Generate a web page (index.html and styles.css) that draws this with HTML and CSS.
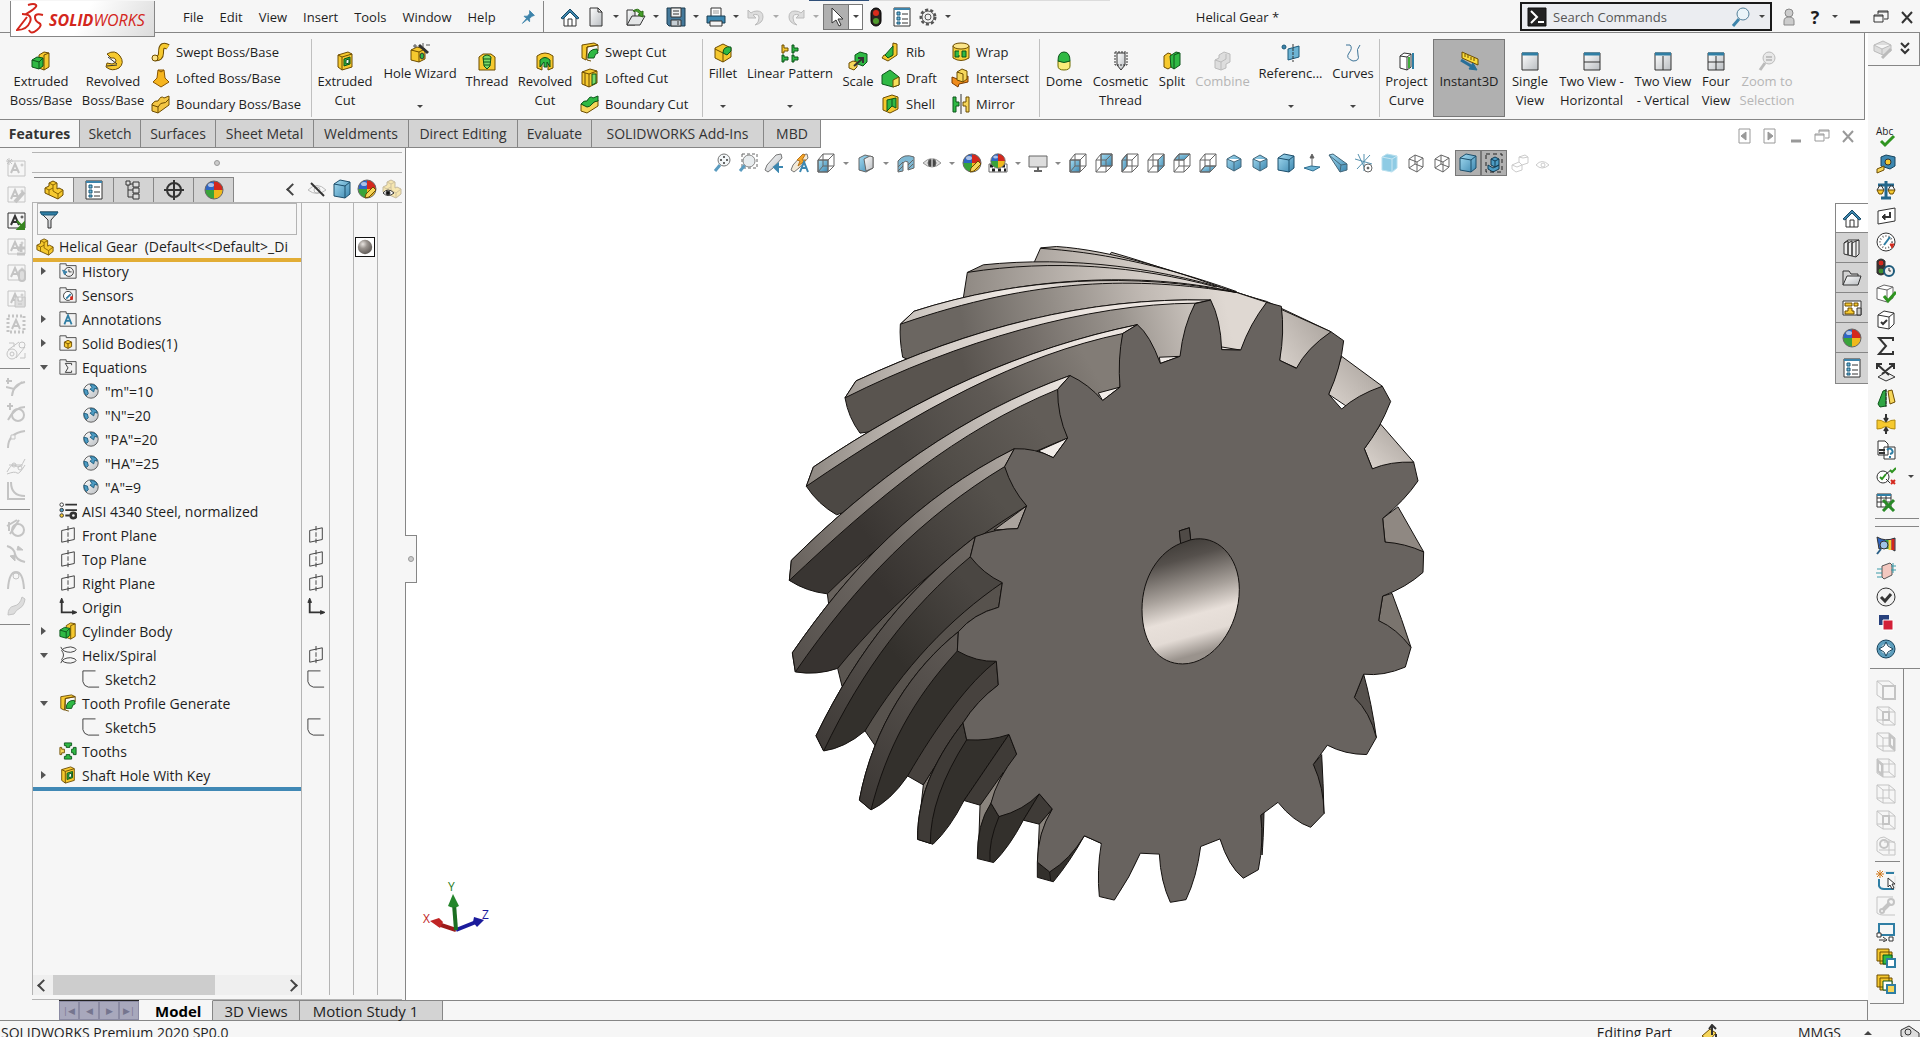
FILE: index.html
```html
<!DOCTYPE html>
<html lang="en">
<head>
    <meta charset="UTF-8">
    <meta name="viewport" content="width=device-width, initial-scale=1.0">
    <title>Helical Gear - SOLIDWORKS</title>
    <link rel="stylesheet" href="styles.css">
</head>
<body>
    <!-- Icon sprite -->
    <svg class="sprite" aria-hidden="true">
        <defs>
            <linearGradient id="steel" x1="0" y1="0" x2="1" y2="1"><stop offset="0" stop-color="#fff"/><stop offset="1" stop-color="#b9bdc1"/></linearGradient>
            <linearGradient id="aqua" x1="0" y1="0" x2="1" y2="1"><stop offset="0" stop-color="#a5dcf2"/><stop offset="1" stop-color="#3c87b0"/></linearGradient>
            <radialGradient id="ball" cx=".35" cy=".3" r=".75"><stop offset="0" stop-color="#e8e4e0"/><stop offset=".4" stop-color="#9a948f"/><stop offset="1" stop-color="#5c5753"/></radialGradient>
        </defs>
        <symbol id="home" viewBox="0 0 20 20"><path d="M4 10v9h12v-9l-6-6z" fill="#fff"/><path d="M1 11l9-9 9 9-2 1-7-7-7 7z" fill="#3d84ab" stroke="#184a66"/><path d="M8 19v-7h4v7"/></symbol>
        <symbol id="doc" viewBox="0 0 20 20"><path d="M4 1h8l4 4v14H4zM12 1v4h4" fill="url(#steel)"/></symbol>
        <symbol id="open" viewBox="0 0 20 20"><path d="M1 18V3h6l2 2v13z" fill="url(#steel)"/><path d="M1 18L6 9h13l-5 9z" fill="#e4e6e7"/><path d="M7 4q5-4 8 1l2-1v6l-5-2 2-1q-3-4-7-3z" fill="#46a02a" stroke="#2a6d14"/></symbol>
        <symbol id="save" viewBox="0 0 20 20"><path d="M1 1h18v18H3l-2-2z" fill="#45799a" stroke="#1d3c50"/><path d="M5 1h10v9H5z" fill="#f0f2f3"/><path d="M7 4h6M7 7h6"/><path d="M5 13h10v6H5z" fill="#c6ced4"/><path d="M12 14v4"/></symbol>
        <symbol id="print" viewBox="0 0 20 20"><path d="M5 9V1h10v8" fill="#fff"/><path d="M1 9h18v7H1z" fill="#3c87b0" stroke="#183c50"/><path d="M4 14h12v5H4z" fill="#f4f4f4"/><path d="M7 4h6M7 6h6" stroke="#999"/></symbol>
        <symbol id="undo" viewBox="0 0 20 20"><path d="M2 3v8h8L7 8q6-2 6 3t-4 7q8-2 8-8t-6-6q-4 0-6 2z" fill="#ddd" stroke="#bbb"/></symbol>
        <symbol id="redo" viewBox="0 0 20 20"><path d="M18 3v8h-8l3-3q-6-2-6 3t4 7q-8-2-8-8t6-6q4 0 6 2z" fill="#ddd" stroke="#bbb"/></symbol>
        <symbol id="cursor" viewBox="0 0 20 20"><path d="M6 1v15l4-3 3 6 2-1-3-6h5z" fill="#fff" stroke="#333"/></symbol>
        <symbol id="traffic" viewBox="0 0 20 20"><rect x="5" y="1" width="10" height="18" rx="5" fill="#2a2320" stroke="#000"/><circle cx="10" cy="6" r="3" fill="#d92b1c" stroke="none"/><circle cx="10" cy="14" r="3" fill="#4f9b2c" stroke="none"/></symbol>
        <symbol id="list" viewBox="0 0 20 20"><path d="M2 1h16v18H2z" fill="#fff"/><path d="M2 2h16" stroke="#3d84ab" stroke-width="2"/><path d="M5 5h3v3H5zM5 10h3v3H5zM5 15h3v2H5z" fill="#6fb5d6" stroke="#1d5a7a"/><path d="M10 7h6M10 12h6M10 16h6"/></symbol>
        <symbol id="cog" viewBox="0 0 20 20"><circle cx="10" cy="10" r="7" stroke-width="3" stroke-dasharray="3 2" stroke="#555"/><circle cx="10" cy="10" r="6" fill="#f0f0f0" stroke="#555"/><circle cx="10" cy="10" r="3" stroke="#555"/></symbol>
        <symbol id="pin" viewBox="0 0 20 20"><path d="M12 2l6 6-3 1-3 3 0 4-3-3-6 5 5-6-3-3h4l3-3z" fill="#3d84ab" stroke="#3d84ab"/></symbol>
        <symbol id="prompt" viewBox="0 0 20 20"><path d="M1 1h18v18H1z" fill="#222" stroke="#111"/><path d="M4 4l6 6-6 6M11 15h6" stroke="#fff" stroke-width="2"/></symbol>
        <symbol id="lens" viewBox="0 0 20 20"><path d="M8 12l-6 7" stroke="#3d84ab" stroke-width="3"/><circle cx="12" cy="7" r="6" fill="#eaf4f9" stroke="#54809a"/></symbol>
        <symbol id="user" viewBox="0 0 20 20"><circle cx="10" cy="6" r="4" fill="#ccc" stroke="#888"/><path d="M5 18v-4q0-4 5-4t5 4v4z" fill="#ccc" stroke="#888"/></symbol>
        <symbol id="win-min" viewBox="0 0 20 20"><path d="M5 15h10" stroke-width="3"/></symbol>
        <symbol id="win-max" viewBox="0 0 20 20"><path d="M3 8h9v7H3zM3 9h9M7 7V4h10v8h-4M7 5h10"/></symbol>
        <symbol id="win-close" viewBox="0 0 20 20"><path d="M5 5l10 11M15 5L5 16" stroke-width="2"/></symbol>
        <symbol id="box-left" viewBox="0 0 20 20"><path d="M5 3h11v14H5z"/><path d="M12 6v8l-5-4z" fill="#999"/></symbol>
        <symbol id="box-right" viewBox="0 0 20 20"><path d="M4 3h11v14H4z"/><path d="M8 6v8l5-4z" fill="#999"/></symbol>

        <!-- Features -->
        <symbol id="extrude" viewBox="0 0 20 20"><path d="M8 4l5-3 5 1v14l-5 3-5-2z" fill="#f6c92f" stroke="#6d4c00"/><path d="M13 4v15M13 4l5-2" stroke="#6d4c00"/><path d="M1 9l5-3 6 1v8l-4 3-7-2z" fill="#2fb944" stroke="#0c541a"/><path d="M1 9l7 2v7M8 11l4-4" stroke="#0c541a"/></symbol>
        <symbol id="revolve" viewBox="0 0 20 20"><path d="M4 3q8-5 13 2t-1 12q-7 4-13-1l1-4 5 1q5-1 4-4t-5-2z" fill="#f6c92f" stroke="#6d4c00"/><path d="M5 6l9 7M4 15l10-1"/></symbol>
        <symbol id="sweep" viewBox="0 0 20 20"><path d="M4 16q6 1 6-5T12 4t5 1" stroke="#6d4c00" stroke-width="6"/><path d="M4 16q6 1 6-5T12 4t5 1" stroke="#f6c92f" stroke-width="4"/><circle cx="4" cy="16" r="3" fill="#fbe38a" stroke="#6d4c00"/></symbol>
        <symbol id="loft" viewBox="0 0 20 20"><path d="M7 2h6l1 8 4 4-8 5-8-5 4-4z" fill="#f6b51f" stroke="#8a5600"/><path d="M7 2l3 2 3-2" stroke="#8a5600"/></symbol>
        <symbol id="boundary" viewBox="0 0 20 20"><path d="M1 10q3-4 6-3 3-6 6-3l5-2v9l-11 8-6-2z" fill="#f3c644" stroke="#6d4c00"/><path d="M1 11l6 2v6M7 13q3-5 5-4t6-4" stroke="#6d4c00"/></symbol>
        <symbol id="boundary-cut" viewBox="0 0 20 20"><path d="M1 10l6 2 11-6v6l-11 7-6-2z" fill="#f6d65a" stroke="#6d4c00"/><path d="M1 10q3-4 6-3 3-6 6-3l5-2v5q-4 0-6 3t-5 3z" fill="#2fb944" stroke="#0c541a"/></symbol>
        <symbol id="cut" viewBox="0 0 20 20"><path d="M3 4l10-3 4 2v13l-10 3-4-3z" fill="#f6c92f" stroke="#6d4c00"/><path d="M3 4l4 2 10-3M7 6v13" stroke="#6d4c00"/><path d="M9 8l6-2v7l-6 2z" fill="#35b648" stroke="#0c541a"/><path d="M11 9l3-1v4l-3 1z" fill="#fff" stroke="#0c541a"/></symbol>
        <symbol id="hole" viewBox="0 0 20 20"><path d="M1 7l6-3 8 2v10l-6 3-8-2z" fill="#f6c92f" stroke="#6d4c00"/><path d="M1 7l8 2v10M9 9l6-3" stroke="#6d4c00"/><ellipse cx="12" cy="13" rx="2" ry="3" fill="#2fb944"/><path d="M9 2l9 8" stroke="#333" stroke-width="3"/><path d="M5 1v4M3 3h4M13 0v4M16 2h4" stroke="#555"/></symbol>
        <symbol id="thread" viewBox="0 0 20 20"><path d="M2 6l4-3h8l4 3v13H2z" fill="#f6c92f" stroke="#6d4c00"/><path d="M6 6q4-4 8 0l-1 9-3 3-3-3z" fill="#7ddb68" stroke="#0c541a"/><path d="M6 8h8M6 11h8M7 14h6" stroke="#0c541a"/></symbol>
        <symbol id="revolve-cut" viewBox="0 0 20 20"><path d="M2 5q8-6 16 0v12l-5 2V8q-3-3-6 0v11l-5-2z" fill="#f6c92f" stroke="#6d4c00"/><path d="M5 9q5-5 10 0v7l-3-5v5h-3v-5l-4 5z" fill="#2fb944" stroke="#0c541a"/></symbol>
        <symbol id="sweep-cut" viewBox="0 0 20 20"><path d="M2 3l12-2 4 2-11 2-1 13-4-2z" fill="#f6c92f" stroke="#6d4c00"/><path d="M7 5l11-2v6M7 5v13l4 1" stroke="#6d4c00"/><path d="M8 16q0-9 9-9l1 4q-3 0-4 5z" fill="#2fb944" stroke="#0c541a"/></symbol>
        <symbol id="loft-cut" viewBox="0 0 20 20"><path d="M2 4l8-3 7 2v12l-8 4-7-3z" fill="#f6c92f" stroke="#6d4c00"/><path d="M2 4l7 2 8-3M9 6v13M5 5v12" stroke="#6d4c00"/><path d="M12 6h4v9l-4 2z" fill="#7ddb68" stroke="#0c541a"/></symbol>
        <symbol id="fillet" viewBox="0 0 20 20"><path d="M2 5l8-4 8 4v9l-8 5-8-4z" fill="#f6c92f" stroke="#6d4c00"/><path d="M2 6l8 4v9" stroke="#6d4c00"/><path d="M10 10q0-7 8-6v4l-4 4z" fill="#2fb944" stroke="#0c541a"/></symbol>
        <symbol id="pattern" viewBox="0 0 20 20"><path d="M2 2h2v3h4v3H4v2H2z" fill="#f6c92f" stroke="#6d4c00"/><path d="M12 2h2v3h4v3h-4v2h-2zM2 12h2v2h4v3H4v2H2zM12 12h2v2h4v3h-4v2h-2z" fill="#2fb944" stroke="#0c541a"/></symbol>
        <symbol id="scale" viewBox="0 0 20 20"><path d="M7 4l5-3 7 2v8l-4 4-8-3z" fill="#2fb944" stroke="#0c541a"/><path d="M1 12l4-2 4 1v5l-3 3-5-2z" fill="#f6d65a" stroke="#6d4c00"/><path d="M6 15l8-7M10 7h5v5" stroke-width="2"/></symbol>
        <symbol id="rib" viewBox="0 0 20 20"><path d="M12 1l4 1v11l-9 6-6-3 2-3 8 1z" fill="#f6c92f" stroke="#6d4c00"/><path d="M4 13l8-9v9l-5 3z" fill="#2fb944" stroke="#0c541a"/></symbol>
        <symbol id="draft" viewBox="0 0 20 20"><path d="M1 7l8-5 9 7v8l-6 2-11-3z" fill="#2fb944" stroke="#0c541a"/><path d="M12 12l6-3v8l-6 2z" fill="#f6e05a" stroke="#6d4c00"/></symbol>
        <symbol id="shell" viewBox="0 0 20 20"><path d="M2 4l9-3 6 2v12l-8 4-7-3z" fill="#f6c92f" stroke="#6d4c00"/><path d="M6 6l9-2v10l-4-2-5 5z" fill="#2fb944" stroke="#0c541a"/><path d="M11 5v7" stroke="#0c541a"/></symbol>
        <symbol id="wrap" viewBox="0 0 20 20"><path d="M2 4v12q8 5 16 0V4" fill="#f6d03a" stroke="#6d4c00"/><ellipse cx="10" cy="4" rx="8" ry="3" fill="#fbe58a" stroke="#6d4c00"/><path d="M8 9H4v6h4v-2M11 9h4v6h-4z" fill="#2fb944" stroke="#0c541a"/></symbol>
        <symbol id="intersect" viewBox="0 0 20 20"><path d="M1 9l8 3 8-4v6l-9 2-1 3-6-4z" fill="#f08c1c" stroke="#7a3a00"/><path d="M6 4l5-3 5 2v8l-4 3-6-2z" fill="#f6d65a" stroke="#6d4c00"/><path d="M6 4l6 2v8" stroke="#6d4c00"/></symbol>
        <symbol id="mirror" viewBox="0 0 20 20"><path d="M2 3h3v5h3v4H5v6H2z" fill="#2fb944" stroke="#0c541a"/><path d="M18 3h-3v5h-3v4h3v6h3z" fill="#f6d65a" stroke="#6d4c00"/><path d="M10 0v20"/></symbol>
        <symbol id="dome" viewBox="0 0 20 20"><path d="M4 10v5q0 4 6 4t6-4v-5z" fill="#f9ec7a" stroke="#6d6c00"/><path d="M4 10q0-9 6-9t6 9q-6 3-12 0z" fill="#2fb944" stroke="#0c541a"/></symbol>
        <symbol id="cosmetic" viewBox="0 0 20 20"><path d="M6 2h8v12l-4 5-4-5z" fill="url(#steel)"/><path d="M4 1h12v13H4z" stroke-dasharray="2 1"/></symbol>
        <symbol id="split" viewBox="0 0 20 20"><path d="M2 5l4-3 3 1v13l-3 2-4-2z" fill="#f6c92f" stroke="#6d4c00"/><path d="M8 5l6-4 4 1v12l-6 4-3-2z" fill="#2fb944" stroke="#0c541a"/><path d="M12 4v14M12 4l5-2" stroke="#0c541a"/></symbol>
        <symbol id="combine" viewBox="0 0 20 20"><path d="M2 9l4-2V4l5-3 6 2v8l-4 2v4l-5 2-6-2z" fill="#ddd" stroke="#bbb"/><path d="M2 9l6 2v8M8 11l5-3V3" stroke="#bbb"/></symbol>
        <symbol id="refgeo" viewBox="0 0 20 20"><circle cx="3" cy="4" r="2" fill="#3d84ab" stroke="#1d5a7a"/><path d="M7 6l11-3v11L7 17z" fill="#6db4d4" stroke="#1d5a7a"/><path d="M12 1v18" stroke-dasharray="3 1"/></symbol>
        <symbol id="curve" viewBox="0 0 20 20"><path d="M3 2h4q3 3-1 8t4 8q7 0 5-6t2-10" stroke="#3c7397"/></symbol>
        <symbol id="project" viewBox="0 0 20 20"><path d="M3 5l4-3 7 1v13l-4 3-7-2z" fill="#fff"/><path d="M3 5l7 1v13M10 6l4-3"/><path d="M12 6v11" stroke="#3fae3a" stroke-width="2"/><path d="M16 2v16" stroke="#2f7ea4" stroke-width="2"/></symbol>
        <symbol id="instant" viewBox="0 0 20 20"><path d="M3 1l16 7v6L3 7z" fill="#f9dc3c" stroke="#6d4c00"/><path d="M6 3v3M9 4v3M12 6v3M15 7v3" stroke="#6d4c00"/><path d="M2 9l10 6" stroke="#286f98" stroke-width="3"/><path d="M10 18l8 1-4-7z" fill="#286f98" stroke="#286f98"/></symbol>
        <symbol id="view1" viewBox="0 0 20 20"><path d="M2 2h16v17H2z" fill="url(#steel)"/><path d="M2 3h16" stroke="#2f7ea4" stroke-width="3"/></symbol>
        <symbol id="view2h" viewBox="0 0 20 20"><use href="#view1"/><path d="M2 11h16"/></symbol>
        <symbol id="view2v" viewBox="0 0 20 20"><use href="#view1"/><path d="M10 5v14"/></symbol>
        <symbol id="view4" viewBox="0 0 20 20"><use href="#view1"/><path d="M10 5v14M2 11h16"/></symbol>
        <symbol id="zoomsel" viewBox="0 0 20 20"><path d="M8 12l-5 7" stroke="#bbb" stroke-width="3"/><circle cx="12" cy="7" r="6" fill="#e8e8e8" stroke="#bbb"/><path d="M9 6h6M9 9h6" stroke="#999"/></symbol>

        <!-- Feature tree -->
        <symbol id="part" viewBox="0 0 20 20"><path d="M1 8l4-2V3l4-2 4 2v6l2-1 4 2v5l-5 4-13-6z" fill="#f6c92f" stroke="#6d4c00"/><path d="M1 8l4 2 4-2 0-3-4-2M9 5l4-2M9 8v3l5 3 5-4M14 14v5M5 10v5" stroke="#8a6400"/></symbol>
        <symbol id="config" viewBox="0 0 20 20"><path d="M4 1v16h5M4 4h5M4 10h5"/><path d="M2 1h4v4H2zM9 2h6v5H9zM9 8h6v5H9zM9 14h6v5H9z" fill="#ddd"/></symbol>
        <symbol id="target" viewBox="0 0 20 20"><circle cx="10" cy="10" r="7" stroke-width="2"/><path d="M10 0v20M0 10h20" stroke-width="2"/></symbol>
        <symbol id="sphere" viewBox="0 0 20 20"><g stroke="none"><path d="M10 10V1a9 9 0 0 1 9 9z" fill="#d4281d"/><path d="M10 10h9a9 9 0 0 1-9 9z" fill="#efb81c"/><path d="M10 10v9a9 9 0 0 1-9-9z" fill="#39a33a"/><path d="M10 10H1a9 9 0 0 1 9-9z" fill="#2f66c4"/><ellipse cx="7" cy="5" rx="3" ry="2" fill="#fff" opacity=".6"/></g><circle cx="10" cy="10" r="9" stroke="#666"/></symbol>
        <symbol id="sphere-pen" viewBox="0 0 20 20"><use href="#sphere"/><path d="M8 19l1-4 7-7 3 3-7 7z" fill="#f6d65a" stroke="#6d4c00"/></symbol>
        <symbol id="scene" viewBox="0 0 20 20"><path d="M1 11h18v8H1z" fill="#fff"/><path d="M2 13h16M4 17h14" stroke="#222" stroke-width="3" stroke-dasharray="3 3"/><use href="#sphere" width="16" height="16" x="2"/></symbol>
        <symbol id="eye-off" viewBox="0 0 20 20"><path d="M1 11q9-9 18 0-9 7-18 0z" stroke="#bbb"/><circle cx="10" cy="11" r="3" stroke="#bbb"/><path d="M4 4l13 13" stroke-width="2"/></symbol>
        <symbol id="solid" viewBox="0 0 20 20"><path d="M2 5l6-4 10 2v12l-5 4-11-2z" fill="url(#aqua)" stroke="#1d4e6b"/><path d="M2 5l11 2v12M13 7l5-4" stroke="#1d4e6b"/></symbol>
        <symbol id="part-eye" viewBox="0 0 20 20"><g opacity=".35"><use href="#part"/></g><path d="M1 14q5-6 11 0-6 5-11 0z" fill="#fff"/><circle cx="6" cy="14" r="2" fill="#111"/></symbol>
        <symbol id="funnel" viewBox="0 0 20 20"><path d="M1 3h18l-7 8v8h-3v-8z" fill="url(#steel)"/><path d="M1 3h18l-2 3H3z" fill="#2f7ea4" stroke="#1d5a7a"/></symbol>
        <symbol id="folder" viewBox="0 0 20 20"><path d="M1 4V2h7v2h11v14H1z" fill="#f1f1f1" stroke="#444"/></symbol>
        <symbol id="history" viewBox="0 0 20 20"><use href="#folder"/><circle cx="11" cy="11" r="5"/><path d="M11 8v3h3"/><path d="M4 9l2 5 3-3z" fill="#3d84ab" stroke="#3d84ab"/></symbol>
        <symbol id="sensors" viewBox="0 0 20 20"><use href="#folder"/><circle cx="10" cy="11" r="5" fill="#fff"/><path d="M8 14l5-5" stroke="#2f7ea4" stroke-width="2"/><path d="M13 12h2v3h-2z" fill="#d4281d" stroke="#d4281d"/></symbol>
        <symbol id="notes" viewBox="0 0 20 20"><use href="#folder"/><path d="M6 16l4-10 4 10M8 12h5" stroke="#2f7ea4" stroke-width="2"/></symbol>
        <symbol id="bodies" viewBox="0 0 20 20"><use href="#folder"/><path d="M6 9l4-2 4 2v5l-4 2-4-2zM6 9l4 2v5M10 11l4-2" fill="#f6c92f" stroke="#6d4c00"/></symbol>
        <symbol id="equations" viewBox="0 0 20 20"><use href="#folder"/><path d="M14 8V6H7l3 5-3 5h7v-2"/></symbol>
        <symbol id="globe" viewBox="0 0 20 20"><circle cx="10" cy="10" r="8" fill="url(#steel)" stroke="#555"/><path d="M9 3q7-1 8 5l-3-1-1 4-4-3 2-2zM2 8l4 1 1 4-2 2q-3-2-3-7z" fill="#4d9cc4" stroke="#1d5a7a"/></symbol>
        <symbol id="material" viewBox="0 0 20 20"><path d="M7 3h13M7 9h13M7 15h5" stroke-width="2"/><circle cx="3" cy="3" r="2" fill="#fff"/><circle cx="3" cy="9" r="2" fill="#4d9cc4"/><circle cx="3" cy="15" r="2" fill="#f6c92f"/><circle cx="16" cy="15" r="3" stroke-width="3"/></symbol>
        <symbol id="plane" viewBox="0 0 20 20"><path d="M3 5l14-3v13L3 18z"/><path d="M10 0v20" stroke-dasharray="5 2"/></symbol>
        <symbol id="origin" viewBox="0 0 20 20"><path d="M3 3v13h15" stroke-width="2"/><path d="M1 5l2-5 2 5zM15 14l5 2-5 2z" fill="#333"/></symbol>
        <symbol id="helix" viewBox="0 0 20 20"><path d="M2 1Q4 7 13 7q6-1 6-3t-6-3Q4 2 3 5M2 19q2-6 11-6 6 1 6 3t-6 3q-9 0-10-4M3 5q4 5 0 10"/></symbol>
        <symbol id="sketch" viewBox="0 0 20 20"><path d="M15 1H1v12q1 5 6 6h12"/></symbol>
        <symbol id="circular" viewBox="0 0 20 20"><path d="M6 1h8v3h-2v2H8V4H6zM6 19h8v-3h-2v-2H8v2H6zM19 6v8h-3v-2h-2V8h2V6z" fill="#2fb944" stroke="#0c541a"/><path d="M1 6v8h2v-2h3V8H3V6z" fill="#f6d65a" stroke="#6d4c00"/></symbol>
        <symbol id="material-ball" viewBox="0 0 20 20"><circle cx="10" cy="10" r="8" fill="url(#ball)" stroke="none"/></symbol>

        <!-- Heads-up view -->
        <symbol id="wire" viewBox="0 0 20 20"><path d="M2 7h10v12H2zM2 7l5-6h11v12l-6 6M12 7l6-6M7 1v12h11M7 13l-5 6"/></symbol>
        <symbol id="v-front" viewBox="0 0 20 20"><path d="M2 7h10v12H2z" fill="url(#aqua)"/><use href="#wire"/></symbol>
        <symbol id="v-back" viewBox="0 0 20 20"><path d="M7 1h11v12H7z" fill="url(#aqua)"/><use href="#wire"/></symbol>
        <symbol id="v-left" viewBox="0 0 20 20"><path d="M2 7l5-6v12l-5 6z" fill="url(#aqua)"/><use href="#wire"/></symbol>
        <symbol id="v-right" viewBox="0 0 20 20"><path d="M12 7l6-6v12l-6 6z" fill="url(#aqua)"/><use href="#wire"/></symbol>
        <symbol id="v-top" viewBox="0 0 20 20"><path d="M2 7l5-6h11l-6 6z" fill="url(#aqua)"/><use href="#wire"/></symbol>
        <symbol id="v-bottom" viewBox="0 0 20 20"><path d="M2 19l5-6h11l-6 6z" fill="url(#aqua)"/><use href="#wire"/></symbol>
        <symbol id="iso" viewBox="0 0 20 20"><path d="M3 6l7-4 7 4v8l-7 4-7-4zM3 6l7 3 7-3M10 9v9" fill="url(#aqua)" stroke="#44677a"/></symbol>
        <symbol id="zoomfit" viewBox="0 0 20 20"><path d="M8 12l-5 6" stroke="#5a9cc0" stroke-width="3"/><circle cx="12" cy="7" r="6" fill="#f2f6f8" stroke="#777"/><path d="M12 3v2M12 9v2M8 7h2M14 7h2" stroke-width="2"/></symbol>
        <symbol id="zoomarea" viewBox="0 0 20 20"><path d="M4 1h15v14H4z" stroke-dasharray="3 2"/><path d="M7 12l-5 6" stroke="#5a9cc0" stroke-width="3"/><circle cx="11" cy="8" r="6" fill="#e8ecee" stroke="#888"/></symbol>
        <symbol id="prevview" viewBox="0 0 20 20"><path d="M1 17l2-5L12 2l5-1 1 4-9 10-5 4z" fill="url(#steel)" stroke="#777"/><path d="M19 14h-7M14 11l-4 3 4 4z" fill="#3c87b0" stroke="#3c87b0" stroke-width="2"/></symbol>
        <symbol id="dynview" viewBox="0 0 20 20"><path d="M1 17l2-5L12 2l5-1 1 4-9 10-5 4z" fill="#f3ead8" stroke="#777"/><path d="M7 7l6-6 2 1-3 5h4l-8 6 2-5z" fill="#f2a52a" stroke="#b9741a"/><path d="M10 19l4-10 4 10M12 15h4" stroke="#3c87b0" stroke-width="2"/></symbol>
        <symbol id="section" viewBox="0 0 20 20"><path d="M3 5l6-3 8 2v11l-7 4-7-2z" fill="url(#aqua)"/><path d="M8 6l6-3 3 1v11l-7 3z" fill="url(#steel)"/></symbol>
        <symbol id="cutview" viewBox="0 0 20 20"><path d="M2 8q6-8 16-4v11l-6 2V9q-3-2-5 1v8l-5 1z" fill="#7fb9d4"/><path d="M2 14l5-5M2 18l5-5M12 12l5-5M12 16l5-5"/></symbol>
        <symbol id="hideshow" viewBox="0 0 20 20"><path d="M1 10q9-9 18 0-9 8-18 0z" fill="#ddd" stroke="#999"/><circle cx="10" cy="10" r="4" fill="#444"/><path d="M10 1v18" stroke="#fff"/></symbol>
        <symbol id="monitor" viewBox="0 0 20 20"><path d="M1 3h18v11H1z" fill="#ddd"/><path d="M10 14v4M6 18h8" stroke-width="2"/></symbol>
        <symbol id="normal" viewBox="0 0 20 20"><path d="M10 15V2M8 5l2-4 2 4z" fill="#555"/><path d="M2 15l7-2 9 1-7 4z" fill="#6db4d4" stroke="#2f6f91"/></symbol>
        <symbol id="persp" viewBox="0 0 20 20"><path d="M1 2l4-1 14 10v6l-7 2z" fill="url(#aqua)" stroke="#44677a"/><path d="M1 2l12 10 6-1M13 12l-1 7" stroke="#44677a"/></symbol>
        <symbol id="axes" viewBox="0 0 20 20"><path d="M4 1l8 17M16 2L3 16M1 6l17 5M10 1v17" stroke="#5490ae"/><circle cx="14" cy="15" r="4" fill="#fff"/><circle cx="14" cy="15" r="1" fill="#333"/></symbol>
        <symbol id="shadow-cube" viewBox="0 0 20 20"><path d="M2 4l5-3 10 2v12l-5 4-10-2z" fill="#8ecbe4" stroke="#b8dfee"/><path d="M2 4l10 2v13M12 6l5-3" stroke="#c7e6f2"/></symbol>
        <symbol id="hexwire" viewBox="0 0 20 20"><path d="M3 6l6-4 8 3v9l-6 5-8-4zM3 6l8 3 6-4M11 9v10M9 2v9l-6 4M9 11l8 3"/></symbol>
        <symbol id="gearcut" viewBox="0 0 20 20"><path d="M4 12l5 3 6-3v4l-6 3-5-3zM7 6l4-2 4 2v6l-4 2-4-2z" fill="#4d9cc4" stroke="#133d54"/><path d="M2 1h16v18H2z" stroke="#222" stroke-dasharray="4 3"/><path d="M7 6l4 2v6M11 8l4-2" stroke="#133d54"/></symbol>
        <symbol id="ghost" viewBox="0 0 20 20"><path d="M2 12l7-3V4l6-2 3 2v6l-6 2v5l-6 2-4-3zM9 9l3 3M9 4l4 1 5-1M2 12l5 2 5-2" stroke="#ccc"/></symbol>
        <symbol id="ghost-eye" viewBox="0 0 20 20"><path d="M3 12q6-7 13 0-7 6-13 0z" stroke="#ccc"/><circle cx="10" cy="12" r="2" stroke="#ccc"/></symbol>

        <!-- Side tool bars -->
        <symbol id="tick" viewBox="0 0 20 20"><path d="M5 13l4 4 9-9" stroke="#2f9420" stroke-width="3"/></symbol>
        <symbol id="tape" viewBox="0 0 20 20"><path d="M5 3l5-2 9 2v9l-5 3-9-3z" fill="#3c87b0" stroke="#17435c"/><circle cx="12" cy="8" r="3" fill="#f6c92f"/><path d="M1 15l7-3v4l-7 3z" fill="#f6d65a" stroke="#6d4c00"/></symbol>
        <symbol id="mass" viewBox="0 0 20 20"><path d="M10 1v16M2 5h16M5 18h10" stroke="#23678c" stroke-width="3"/><path d="M1 10h7l-2 4H3zM12 10h7l-2 4h-3z" fill="#f6c92f" stroke="#6d4c00"/><path d="M4 5l-3 5M5 5l3 5M15 5l-3 5M16 5l3 5"/></symbol>
        <symbol id="section-prop" viewBox="0 0 20 20"><path d="M2 5l17-3v13L2 18z" fill="#fff"/><path d="M14 6v5H9" stroke-width="2"/><path d="M9 8v6l-3-3z" fill="#333"/></symbol>
        <symbol id="gauge" viewBox="0 0 20 20"><circle cx="10" cy="10" r="9" fill="#fff"/><circle cx="10" cy="10" r="6" stroke="#777" stroke-dasharray="1 2" stroke-width="2"/><path d="M8 13l6-8" stroke="#2f7ea4" stroke-width="2"/><path d="M14 12h4l-2 4z" fill="#d4281d" stroke="#d4281d"/></symbol>
        <symbol id="perf" viewBox="0 0 20 20"><path d="M1 3q4-4 8 0v12q-4 4-8 0z" fill="#3a3130"/><circle cx="5" cy="5" r="3" fill="#d4281d"/><circle cx="5" cy="13" r="3" fill="#3e8b2e"/><circle cx="13" cy="13" r="5" fill="#eee" stroke="#1d5a7a" stroke-width="2"/><path d="M13 10v3h2"/></symbol>
        <symbol id="cube-check" viewBox="0 0 20 20"><path d="M1 4l7-3 9 2v11l-6 4-10-3zM1 4l10 2v12M11 6l6-3" fill="#fff" stroke="#666"/><path d="M8 12l4 5 8-9" stroke="#2f9420" stroke-width="3"/></symbol>
        <symbol id="cube-tick" viewBox="0 0 20 20"><path d="M2 5l6-4 10 2v11l-5 5-11-2zM2 5l11 2v12M13 7l5-4" fill="#fff"/><path d="M5 12l2 2 4-4" stroke-width="2"/></symbol>
        <symbol id="sigma" viewBox="0 0 20 20"><path d="M17 5V2H3l7 8-7 8h14v-3" stroke-width="2"/></symbol>
        <symbol id="thick" viewBox="0 0 20 20"><path d="M2 15l8-5 9 5-9 4z" fill="#eee"/><path d="M2 3l11 10M17 3L6 12M1 7V2h5M13 2h5v5" stroke-width="2"/></symbol>
        <symbol id="compare" viewBox="0 0 20 20"><path d="M2 16l5-13 3-1v16l-6 1z" fill="#2fa544" stroke="#0c541a"/><path d="M12 3l4-1 3 12-5 2z" fill="#f6d65a" stroke="#6d4c00"/><path d="M10 1v18" stroke-dasharray="3 1"/></symbol>
        <symbol id="thickness" viewBox="0 0 20 20"><path d="M1 6q5 0 7 2h4q2-2 7-2v9q-5 0-7-2H8q-2 2-7 2z" fill="#f6c92f" stroke="#b08a10"/><path d="M10 0v7M8 4l2 3 2-3M10 20v-6M8 17l2-3 2 3" stroke-width="2"/></symbol>
        <symbol id="doc-q" viewBox="0 0 20 20"><path d="M2 1h7l3 3v11H2zM8 7h11v12H8z" fill="#fff"/><path d="M3 10h6M3 13h6" stroke-width="2"/><path d="M11 10q3-3 5 0t-2 4M14 16v2" stroke="#2f7ea4" stroke-width="2"/></symbol>
        <symbol id="check-x" viewBox="0 0 20 20"><circle cx="7" cy="11" r="6" fill="#fff"/><path d="M4 11l2 2 4-5" stroke="#2f9420" stroke-width="2"/><path d="M10 8l5-4M10 13l4 4"/><path d="M14 4l2 2 4-4" stroke="#2f9420" stroke-width="2"/><path d="M15 14l4 4M19 14l-4 4" stroke="#d4281d" stroke-width="2"/></symbol>
        <symbol id="excel" viewBox="0 0 20 20"><path d="M1 2h14v13H1zM1 6h14M1 10h14M5 2v13M10 2v13" fill="#fff"/><path d="M1 3h14" stroke="#2f7ea4" stroke-width="2"/><path d="M7 8l11 11M18 8L7 19" stroke="#2a8a27" stroke-width="3"/></symbol>
        <symbol id="sim" viewBox="0 0 20 20"><path d="M1 2q8 5 18 1v13q-9-6-16-2z" fill="#2f66c4"/><path d="M11 5v9" stroke="#2fa544" stroke-width="3"/><path d="M14 5v10" stroke="#f6d02f" stroke-width="3"/><path d="M17 4v11" stroke="#d4281d" stroke-width="3"/><circle cx="8" cy="10" r="4" fill="#9fc4e8"/><path d="M5 14l-4 5" stroke="#2a5f86" stroke-width="2"/></symbol>
        <symbol id="flow" viewBox="0 0 20 20"><path d="M6 5l8-3 2 2v10l-8 4-2-2z" fill="#f3c8c0" stroke="#555"/><path d="M1 8h5M0 12h6M1 16h5M15 5h5M15 9h5M17 2v10" stroke="#3b9aa8"/></symbol>
        <symbol id="round-check" viewBox="0 0 20 20"><circle cx="10" cy="10" r="9" fill="#f1f1f1"/><path d="M5 10l4 4 6-7" stroke-width="3"/></symbol>
        <symbol id="flags" viewBox="0 0 20 20"><path d="M3 2h10v10H3z" fill="#27407c" stroke="none"/><path d="M7 7h10v10H7z" fill="#d21f37" stroke="#fff"/></symbol>
        <symbol id="ring" viewBox="0 0 20 20"><circle cx="10" cy="10" r="7" stroke="#5d9ebd" stroke-width="4"/><circle cx="10" cy="10" r="9" stroke="#17435c"/><path d="M10 3l2 4 5 3-5 3-2 4-2-4-5-3 5-3z" fill="#fff" stroke="#17435c"/></symbol>
        <symbol id="g-cube" viewBox="0 0 20 20"><path d="M1 1h12l6 5v13H7l-6-4zM7 6h12M7 6v13M1 1l6 5M13 1v13H1M13 14l6 5"/></symbol>
        <symbol id="g-front" viewBox="0 0 20 20"><path d="M7 6h12v13H7z" stroke-width="2"/><path d="M1 1h12l6 5M1 1v14l6 4M1 1l6 5"/></symbol>
        <symbol id="g-back" viewBox="0 0 20 20"><path d="M7 6h6v8H7z" stroke-width="2"/><use href="#g-cube"/></symbol>
        <symbol id="g-right" viewBox="0 0 20 20"><path d="M14 3l4 4v10l-4-4z" stroke-width="2"/><use href="#g-cube"/></symbol>
        <symbol id="g-left" viewBox="0 0 20 20"><path d="M2 3l4 4v10l-4-4z" stroke-width="2"/><use href="#g-cube"/></symbol>
        <symbol id="g-round" viewBox="0 0 20 20"><path d="M1 5q2-4 7-4l11 6v12H7l-6-4z"/><circle cx="8" cy="8" r="4" stroke-width="2"/><path d="M8 6h11M13 4v14M3 14h16"/></symbol>
        <symbol id="grid-cursor" viewBox="0 0 20 20"><path d="M8 2h11M19 6v13H8" stroke="#ddd"/><path d="M10 3h8M3 9v7q1 3 5 3h10" stroke="#2f7ea4" stroke-width="2"/><path d="M4 0v8M0 4h8M1 1l6 6M7 1L1 7" stroke="#d0781c"/><path d="M12 8v9l2-2 2 4 2-1-2-4h3z" fill="#fff"/></symbol>
        <symbol id="repair" viewBox="0 0 20 20"><path d="M17 1H1v16q2 2 6 2h12"/><path d="M7 14l7-7" stroke-width="4"/><circle cx="15" cy="6" r="3" stroke-width="2"/><circle cx="6" cy="15" r="2" stroke-width="2"/></symbol>
        <symbol id="move" viewBox="0 0 20 20"><path d="M3 2h15v11H3z" stroke="#2f7ea4" stroke-width="2"/><path d="M1 11h4v4H1zM13 15h4v4h-4z" fill="#fff"/><path d="M3 18h6M7 15l4 3-4 2"/></symbol>
        <symbol id="stack-green" viewBox="0 0 20 20"><path d="M1 1h12v12H1zM4 4h12v12H4z" fill="#f6c92f" stroke="#6d4c00"/><path d="M7 7h9v9H7z" fill="#2fb944" stroke="#0c541a"/><path d="M11 11h8v8h-8z" fill="#fff" stroke="#2f7ea4" stroke-width="2"/></symbol>
        <symbol id="stack-white" viewBox="0 0 20 20"><path d="M1 1h12v12H1zM4 4h12v12H4z" fill="#f6c92f" stroke="#6d4c00"/><path d="M7 7h9v9H7z" fill="#fff" stroke="#0c541a"/><path d="M11 11h8v8h-8z" fill="#f6d65a" stroke="#2f7ea4" stroke-width="2"/></symbol>
        <symbol id="books" viewBox="0 0 20 20"><path d="M2 5l4-2v14l-4-1zM6 5l4-2v15l-4-1zM10 5l4-2v16l-4-1zM14 3l3-1v14l-3 3M2 5l4-3 11 0" fill="#eee"/></symbol>
        <symbol id="folder-open" viewBox="0 0 20 20"><path d="M1 17V3h6l2 3h7v3"/><path d="M1 17L5 8h14l-3 9z" fill="url(#steel)"/></symbol>
        <symbol id="palette" viewBox="0 0 20 20"><path d="M1 3h18v14H1z" fill="#fff"/><path d="M3 5h7v3H3zM12 5h4v3h-4zM6 10h4v3h2v3H3v-3h3z" fill="#f6c92f" stroke="#6d4c00"/><path d="M15 10h4v7h-4z" fill="#ccc"/></symbol>
        <symbol id="note" viewBox="0 0 20 20"><path d="M2 3h17v15H2z"/><path d="M5 15l4-9 4 9M7 12h4" stroke-width="2"/><circle cx="16" cy="7" r="1"/></symbol>
        <symbol id="note-new" viewBox="0 0 20 20"><use href="#note"/><path d="M3 0v7M0 3h7M1 1l5 5M6 1L1 6"/></symbol>
        <symbol id="note-edit" viewBox="0 0 20 20"><use href="#note"/><path d="M9 18l9-10" stroke-width="4"/></symbol>
        <symbol id="note-go" viewBox="0 0 20 20"><use href="#note"/><path d="M11 11l6 6M18 13v6h-6z" stroke="#37851f" fill="#37851f" stroke-width="2"/></symbol>
        <symbol id="note-add" viewBox="0 0 20 20"><use href="#note"/><path d="M15 8v8M11 12h8M11 18h8" stroke-width="3"/></symbol>
        <symbol id="note-mate" viewBox="0 0 20 20"><use href="#note"/><rect x="13" y="8" width="6" height="11" rx="3" stroke-width="2" fill="#ddd"/></symbol>
        <symbol id="note-save" viewBox="0 0 20 20"><use href="#note"/><path d="M9 9h10v10H9zM12 9v4h4V9M12 16h4" fill="#ddd"/></symbol>
        <symbol id="note-frame" viewBox="0 0 20 20"><path d="M2 2h16v16H2z" stroke-width="3" stroke-dasharray="2 2"/><path d="M6 15l4-9 4 9M8 12h4" stroke-width="2"/></symbol>
        <symbol id="belt" viewBox="0 0 20 20"><circle cx="6" cy="14" r="5"/><circle cx="6" cy="14" r="2"/><circle cx="16" cy="5" r="3"/><path d="M2 10L13 2M10 18l9-11M3 3h5v4M19 13v5h-5"/></symbol>
        <symbol id="spark-line" viewBox="0 0 20 20"><path d="M6 19q1-12 13-14M2 1v6M0 4h6M0 10l8 2 8-7" stroke-width="2"/></symbol>
        <symbol id="spark-loop" viewBox="0 0 20 20"><circle cx="12" cy="12" r="6" stroke-width="2"/><path d="M19 4q-10 0-17 13M4 0v7M1 3h6" stroke-width="2"/></symbol>
        <symbol id="arc" viewBox="0 0 20 20"><path d="M2 19Q2 4 19 2" stroke-width="2"/><path d="M5 6h4v4H5z" fill="#f6f6f6"/></symbol>
        <symbol id="spline" viewBox="0 0 20 20"><path d="M1 17q5-10 9-6t9-7M1 19q8-3 10-1t8-8M3 10h14"/><circle cx="8" cy="10" r="2"/><circle cx="14" cy="13" r="2"/></symbol>
        <symbol id="corner" viewBox="0 0 20 20"><path d="M2 1v17h17M5 1q0 14 14 14" stroke-width="2"/></symbol>
        <symbol id="loop" viewBox="0 0 20 20"><circle cx="12" cy="12" r="6" stroke-width="2"/><path d="M1 8l10-6M4 16L13 2M3 4v9" stroke-width="2"/></symbol>
        <symbol id="wave" viewBox="0 0 20 20"><path d="M1 2q7 2 8 8t10 8" stroke-width="2"/><path d="M11 6h6l-5-4zM4 12l5 5v-6z" fill="#c4c4c4"/></symbol>
        <symbol id="arch" viewBox="0 0 20 20"><path d="M2 19Q3 2 10 2t8 17" stroke-width="2"/><circle cx="10" cy="6" r="3"/></symbol>
        <symbol id="surf" viewBox="0 0 20 20"><path d="M2 19q0-8 6-9t8-9l3 2q-1 7-5 9t-6 6z" fill="#ddd"/></symbol>
        <symbol id="sticker" viewBox="0 0 20 20"><path d="M1 6l9-4 8 4v6l-8 4-9-4zM1 6l8 4 9-4M9 10v6" fill="#ddd" stroke="#bbb"/><path d="M9 19l9-9" stroke="#bbb" stroke-width="3"/></symbol>
        <symbol id="chevrons" viewBox="0 0 20 20"><path d="M6 4l4 4 4-4M6 10l4 4 4-4" stroke-width="2"/></symbol>
        <symbol id="tag" viewBox="0 0 20 20"><path d="M1 6l8-4 10 7v7l-8 2L1 12z" fill="#ddd"/><circle cx="8" cy="8" r="3"/></symbol>
        <symbol id="rebuild" viewBox="0 0 20 20"><path d="M2 12l8-7 6 4-7 8z" fill="#f6d65a" stroke="#6d4c00"/><path d="M12 2v9M9 5l3-4 4 4M16 10v8" stroke-width="2"/></symbol>
    </svg>

    <!-- Title bar -->
    <header class="titlebar">
        <div class="titlebar-left">
            <a class="logo" href="#" aria-label="SOLIDWORKS">
                <svg class="logo-mark" viewBox="0 0 28 32"><path d="M12 3q6-2 8 0t-10 9M6 12q11 0 8 8T1 28l10-13M27 13q-8-2-8 2t4 6-2 7-8 0"/></svg>
                <span class="logo-text"><b>SOLID</b>WORKS</span>
            </a>
            <nav class="menu">
                <button>File</button><button>Edit</button><button>View</button><button>Insert</button><button>Tools</button><button>Window</button><button>Help</button>
            </nav>
            <button class="tool pin" aria-label="Pin menu"><svg class="icon"><use href="#pin"/></svg></button>
        </div>
        <div class="quick">
            <button class="tool" aria-label="Home"><svg class="icon"><use href="#home"/></svg></button>
            <button class="tool" aria-label="New"><svg class="icon"><use href="#doc"/></svg></button><button class="drop" aria-label="New options"></button>
            <button class="tool" aria-label="Open"><svg class="icon"><use href="#open"/></svg></button><button class="drop" aria-label="Open options"></button>
            <button class="tool" aria-label="Save"><svg class="icon"><use href="#save"/></svg></button><button class="drop" aria-label="Save options"></button>
            <button class="tool" aria-label="Print"><svg class="icon"><use href="#print"/></svg></button><button class="drop" aria-label="Print options"></button>
            <button class="tool" aria-label="Undo"><svg class="icon"><use href="#undo"/></svg></button><button class="drop faded" aria-label="Undo list"></button>
            <button class="tool" aria-label="Redo"><svg class="icon"><use href="#redo"/></svg></button><button class="drop faded" aria-label="Redo list"></button>
            <button class="tool pressed" aria-label="Select"><svg class="icon"><use href="#cursor"/></svg></button><button class="drop boxed" aria-label="Select options"></button>
            <button class="tool" aria-label="Rebuild"><svg class="icon"><use href="#traffic"/></svg></button>
            <button class="tool" aria-label="File properties"><svg class="icon"><use href="#list"/></svg></button>
            <button class="tool" aria-label="Options"><svg class="icon"><use href="#cog"/></svg></button><button class="drop" aria-label="More options"></button>
        </div>
        <div class="doc-title">Helical Gear *</div>
        <div class="search">
            <svg class="icon"><use href="#prompt"/></svg>
            <input type="text" placeholder="Search Commands" aria-label="Search Commands">
            <button class="tool" aria-label="Search"><svg class="icon"><use href="#lens"/></svg></button><button class="drop" aria-label="Search options"></button>
        </div>
        <div class="window-buttons">
            <button class="tool" aria-label="Log in"><svg class="icon"><use href="#user"/></svg></button>
            <button class="tool help">?</button><button class="drop" aria-label="Help options"></button>
            <button class="tool" aria-label="Minimize"><svg class="icon"><use href="#win-min"/></svg></button>
            <button class="tool" aria-label="Restore"><svg class="icon"><use href="#win-max"/></svg></button>
            <button class="tool" aria-label="Close"><svg class="icon"><use href="#win-close"/></svg></button>
        </div>
        <div class="top-strip"></div>
    </header>

    <div class="main">
        <div class="work">
            <!-- Ribbon -->
            <div class="ribbon">
                <button class="big"><svg class="icon"><use href="#extrude"/></svg>Extruded<br>Boss/Base</button>
                <button class="big"><svg class="icon"><use href="#revolve"/></svg>Revolved<br>Boss/Base</button>
                <div class="stack divided">
                    <button><svg class="icon"><use href="#sweep"/></svg>Swept Boss/Base</button>
                    <button><svg class="icon"><use href="#loft"/></svg>Lofted Boss/Base</button>
                    <button><svg class="icon"><use href="#boundary"/></svg>Boundary Boss/Base</button>
                </div>
                <button class="big"><svg class="icon"><use href="#cut"/></svg>Extruded<br>Cut</button>
                <button class="big menu-btn"><svg class="icon"><use href="#hole"/></svg>Hole Wizard</button>
                <button class="big"><svg class="icon"><use href="#thread"/></svg>Thread</button>
                <button class="big"><svg class="icon"><use href="#revolve-cut"/></svg>Revolved<br>Cut</button>
                <div class="stack divided">
                    <button><svg class="icon"><use href="#sweep-cut"/></svg>Swept Cut</button>
                    <button><svg class="icon"><use href="#loft-cut"/></svg>Lofted Cut</button>
                    <button><svg class="icon"><use href="#boundary-cut"/></svg>Boundary Cut</button>
                </div>
                <button class="big menu-btn"><svg class="icon"><use href="#fillet"/></svg>Fillet</button>
                <button class="big menu-btn"><svg class="icon"><use href="#pattern"/></svg>Linear Pattern</button>
                <button class="big"><svg class="icon"><use href="#scale"/></svg>Scale</button>
                <div class="stack">
                    <button><svg class="icon"><use href="#rib"/></svg>Rib</button>
                    <button><svg class="icon"><use href="#draft"/></svg>Draft</button>
                    <button><svg class="icon"><use href="#shell"/></svg>Shell</button>
                </div>
                <div class="stack divided">
                    <button><svg class="icon"><use href="#wrap"/></svg>Wrap</button>
                    <button><svg class="icon"><use href="#intersect"/></svg>Intersect</button>
                    <button><svg class="icon"><use href="#mirror"/></svg>Mirror</button>
                </div>
                <button class="big"><svg class="icon"><use href="#dome"/></svg>Dome</button>
                <button class="big"><svg class="icon"><use href="#cosmetic"/></svg>Cosmetic<br>Thread</button>
                <button class="big"><svg class="icon"><use href="#split"/></svg>Split</button>
                <button class="big" disabled><svg class="icon"><use href="#combine"/></svg>Combine</button>
                <button class="big menu-btn"><svg class="icon"><use href="#refgeo"/></svg>Referenc...</button>
                <button class="big menu-btn divided"><svg class="icon"><use href="#curve"/></svg>Curves</button>
                <button class="big"><svg class="icon"><use href="#project"/></svg>Project<br>Curve</button>
                <button class="big active"><svg class="icon"><use href="#instant"/></svg>Instant3D</button>
                <button class="big"><svg class="icon"><use href="#view1"/></svg>Single<br>View</button>
                <button class="big"><svg class="icon"><use href="#view2h"/></svg>Two View -<br>Horizontal</button>
                <button class="big"><svg class="icon"><use href="#view2v"/></svg>Two View<br>- Vertical</button>
                <button class="big"><svg class="icon"><use href="#view4"/></svg>Four<br>View</button>
                <button class="big" disabled><svg class="icon"><use href="#zoomsel"/></svg>Zoom to<br>Selection</button>
            </div>

            <div class="tab-strip">
                <div class="tabs">
                    <button class="current">Features</button><button>Sketch</button><button>Surfaces</button><button>Sheet Metal</button><button>Weldments</button><button>Direct Editing</button><button>Evaluate</button><button>SOLIDWORKS Add-Ins</button><button>MBD</button>
                </div>
                <div class="doc-buttons">
                    <button class="tool" aria-label="Previous window"><svg class="icon"><use href="#box-left"/></svg></button>
                    <button class="tool" aria-label="Next window"><svg class="icon"><use href="#box-right"/></svg></button>
                    <button class="tool" aria-label="Minimize document"><svg class="icon"><use href="#win-min"/></svg></button>
                    <button class="tool" aria-label="Restore document"><svg class="icon"><use href="#win-max"/></svg></button>
                    <button class="tool" aria-label="Close document"><svg class="icon"><use href="#win-close"/></svg></button>
                </div>
            </div>

            <div class="workspace">
                <div class="left-bar">
                    <svg class="icon"><use href="#note-new"/></svg>
                    <svg class="icon"><use href="#note-edit"/></svg>
                    <svg class="icon dark"><use href="#note-go"/></svg>
                    <svg class="icon"><use href="#note-add"/></svg>
                    <svg class="icon"><use href="#note-mate"/></svg>
                    <svg class="icon"><use href="#note-save"/></svg>
                    <svg class="icon"><use href="#note-frame"/></svg>
                    <svg class="icon"><use href="#belt"/></svg>
                    <hr>
                    <svg class="icon"><use href="#spark-line"/></svg>
                    <svg class="icon"><use href="#spark-loop"/></svg>
                    <svg class="icon"><use href="#arc"/></svg>
                    <svg class="icon"><use href="#spline"/></svg>
                    <svg class="icon"><use href="#corner"/></svg>
                    <hr>
                    <svg class="icon"><use href="#loop"/></svg>
                    <svg class="icon"><use href="#wave"/></svg>
                    <svg class="icon"><use href="#arch"/></svg>
                    <svg class="icon"><use href="#surf"/></svg>
                    <hr>
                </div>

                <!-- Feature manager -->
                <aside class="panel">
                    <div class="grip"><i class="dot"></i></div>
                    <div class="panel-tabs">
                        <button class="ptab current" aria-label="Feature tree"><svg class="icon"><use href="#part"/></svg></button>
                        <button class="ptab" aria-label="Properties"><svg class="icon"><use href="#list"/></svg></button>
                        <button class="ptab" aria-label="Configurations"><svg class="icon"><use href="#config"/></svg></button>
                        <button class="ptab" aria-label="Dimensions"><svg class="icon"><use href="#target"/></svg></button>
                        <button class="ptab" aria-label="Display"><svg class="icon"><use href="#sphere"/></svg></button>
                        <div class="pane-head">
                            <button class="chev" aria-label="Collapse display pane"></button>
                            <svg class="icon"><use href="#eye-off"/></svg>
                            <svg class="icon"><use href="#solid"/></svg>
                            <svg class="icon"><use href="#sphere-pen"/></svg>
                            <svg class="icon"><use href="#part-eye"/></svg>
                        </div>
                    </div>
                    <div class="panel-body">
                        <div class="tree-col">
                            <label class="filter"><svg class="icon"><use href="#funnel"/></svg><input type="text" aria-label="Filter tree"></label>
                            <div class="root"><svg class="icon"><use href="#part"/></svg><span>Helical Gear&nbsp; (Default&lt;&lt;Default&gt;_Di</span></div>
                            <ul class="tree">
                                <li class="closed"><svg class="icon"><use href="#history"/></svg>History</li>
                                <li><svg class="icon"><use href="#sensors"/></svg>Sensors</li>
                                <li class="closed"><svg class="icon"><use href="#notes"/></svg>Annotations</li>
                                <li class="closed"><svg class="icon"><use href="#bodies"/></svg>Solid Bodies(1)</li>
                                <li class="opened"><svg class="icon"><use href="#equations"/></svg>Equations</li>
                                <li class="child"><svg class="icon"><use href="#globe"/></svg>"m"=10</li>
                                <li class="child"><svg class="icon"><use href="#globe"/></svg>"N"=20</li>
                                <li class="child"><svg class="icon"><use href="#globe"/></svg>"PA"=20</li>
                                <li class="child"><svg class="icon"><use href="#globe"/></svg>"HA"=25</li>
                                <li class="child"><svg class="icon"><use href="#globe"/></svg>"A"=9</li>
                                <li><svg class="icon"><use href="#material"/></svg>AISI 4340 Steel, normalized</li>
                                <li><svg class="icon"><use href="#plane"/></svg>Front Plane</li>
                                <li><svg class="icon"><use href="#plane"/></svg>Top Plane</li>
                                <li><svg class="icon"><use href="#plane"/></svg>Right Plane</li>
                                <li><svg class="icon"><use href="#origin"/></svg>Origin</li>
                                <li class="closed"><svg class="icon"><use href="#extrude"/></svg>Cylinder Body</li>
                                <li class="opened"><svg class="icon"><use href="#helix"/></svg>Helix/Spiral</li>
                                <li class="child"><svg class="icon"><use href="#sketch"/></svg>Sketch2</li>
                                <li class="opened"><svg class="icon"><use href="#sweep-cut"/></svg>Tooth Profile Generate</li>
                                <li class="child"><svg class="icon"><use href="#sketch"/></svg>Sketch5</li>
                                <li><svg class="icon"><use href="#circular"/></svg>Tooths</li>
                                <li class="closed"><svg class="icon"><use href="#cut"/></svg>Shaft Hole With Key</li>
                            </ul>
                            <div class="rollback"></div>
                            <div class="scrollbar"><button class="chev" aria-label="Scroll left"></button><div class="track"><div class="thumb"></div></div><button class="chev right" aria-label="Scroll right"></button></div>
                        </div>
                        <ul class="state-col">
                            <li></li><li></li><li></li><li></li><li></li><li></li><li></li><li></li><li></li><li></li><li></li>
                            <li><svg class="icon"><use href="#plane"/></svg></li>
                            <li><svg class="icon"><use href="#plane"/></svg></li>
                            <li><svg class="icon"><use href="#plane"/></svg></li>
                            <li><svg class="icon"><use href="#origin"/></svg></li>
                            <li></li>
                            <li><svg class="icon"><use href="#plane"/></svg></li>
                            <li><svg class="icon"><use href="#sketch"/></svg></li>
                            <li></li>
                            <li><svg class="icon"><use href="#sketch"/></svg></li>
                        </ul>
                        <div class="pane-col"></div>
                        <div class="pane-col"><svg class="icon swatch"><use href="#material-ball"/></svg></div>
                    </div>
                    <div class="panel-foot"></div>
                    <button class="flyout" aria-label="Collapse panel"><i class="dot"></i></button>
                </aside>

                <!-- Graphics area -->
                <main class="canvas">
                    <div class="hud">
                        <button class="tool" aria-label="Zoom to fit"><svg class="icon"><use href="#zoomfit"/></svg></button>
                        <button class="tool" aria-label="Zoom to area"><svg class="icon"><use href="#zoomarea"/></svg></button>
                        <button class="tool" aria-label="Previous view"><svg class="icon"><use href="#prevview"/></svg></button>
                        <button class="tool" aria-label="Annotation views"><svg class="icon"><use href="#dynview"/></svg></button>
                        <button class="tool" aria-label="View orientation"><svg class="icon"><use href="#v-front"/></svg></button><button class="drop" aria-label="Orientation list"></button>
                        <button class="tool" aria-label="Display style"><svg class="icon"><use href="#section"/></svg></button><button class="drop" aria-label="Display list"></button>
                        <button class="tool" aria-label="Section view"><svg class="icon"><use href="#cutview"/></svg></button>
                        <button class="tool" aria-label="Hide or show"><svg class="icon"><use href="#hideshow"/></svg></button><button class="drop" aria-label="Hide list"></button>
                        <button class="tool" aria-label="Edit appearance"><svg class="icon"><use href="#sphere-pen"/></svg></button>
                        <button class="tool" aria-label="Apply scene"><svg class="icon"><use href="#scene"/></svg></button><button class="drop" aria-label="Scene list"></button>
                        <button class="tool" aria-label="View settings"><svg class="icon"><use href="#monitor"/></svg></button><button class="drop" aria-label="Settings list"></button>
                        <button class="tool" aria-label="Front"><svg class="icon"><use href="#v-front"/></svg></button>
                        <button class="tool" aria-label="Back"><svg class="icon"><use href="#v-back"/></svg></button>
                        <button class="tool" aria-label="Left"><svg class="icon"><use href="#v-left"/></svg></button>
                        <button class="tool" aria-label="Right"><svg class="icon"><use href="#v-right"/></svg></button>
                        <button class="tool" aria-label="Top"><svg class="icon"><use href="#v-top"/></svg></button>
                        <button class="tool" aria-label="Bottom"><svg class="icon"><use href="#v-bottom"/></svg></button>
                        <button class="tool" aria-label="Isometric"><svg class="icon"><use href="#iso"/></svg></button>
                        <button class="tool" aria-label="Trimetric"><svg class="icon"><use href="#iso"/></svg></button>
                        <button class="tool" aria-label="Dimetric"><svg class="icon"><use href="#solid"/></svg></button>
                        <button class="tool" aria-label="Normal to"><svg class="icon"><use href="#normal"/></svg></button>
                        <button class="tool" aria-label="Perspective"><svg class="icon"><use href="#persp"/></svg></button>
                        <button class="tool" aria-label="Axes"><svg class="icon"><use href="#axes"/></svg></button>
                        <button class="tool" aria-label="Shaded"><svg class="icon"><use href="#shadow-cube"/></svg></button>
                        <button class="tool" aria-label="Hidden lines visible"><svg class="icon"><use href="#hexwire"/></svg></button>
                        <button class="tool" aria-label="Wireframe"><svg class="icon"><use href="#hexwire"/></svg></button>
                        <button class="tool pressed" aria-label="Shaded with edges"><svg class="icon"><use href="#solid"/></svg></button>
                        <button class="tool pressed" aria-label="Shadows"><svg class="icon"><use href="#gearcut"/></svg></button>
                        <button class="tool" aria-label="Isolate"><svg class="icon"><use href="#ghost"/></svg></button>
                        <button class="tool small" aria-label="Show hidden"><svg class="icon"><use href="#ghost-eye"/></svg></button>
                    </div>

                    <svg class="gear" viewBox="0 0 1980 1568" preserveAspectRatio="none" role="img" aria-label="Helical gear model">
                        <defs>
                            <linearGradient id="topLand" gradientUnits="userSpaceOnUse" x1="380" y1="0" x2="1500" y2="0"><stop offset="0" stop-color="#c4beb8"/><stop offset=".3" stop-color="#efe9e4"/><stop offset=".55" stop-color="#c9c2bc"/><stop offset="1" stop-color="#e4ddd8"/></linearGradient>
                            <linearGradient id="topFlank" gradientUnits="userSpaceOnUse" x1="600" y1="300" x2="1350" y2="100"><stop offset="0" stop-color="#6b6661"/><stop offset=".35" stop-color="#938d87"/><stop offset=".7" stop-color="#c0b9b3"/><stop offset="1" stop-color="#dfd8d2"/></linearGradient>
                            <linearGradient id="backFlank" gradientUnits="userSpaceOnUse" x1="580" y1="0" x2="1300" y2="0"><stop offset="0" stop-color="#8f8983"/><stop offset=".6" stop-color="#c9c2bc"/><stop offset="1" stop-color="#e3dcd7"/></linearGradient>
                            <linearGradient id="midLand" gradientUnits="userSpaceOnUse" x1="120" y1="0" x2="950" y2="0"><stop offset="0" stop-color="#8f8983"/><stop offset=".5" stop-color="#d6cfc9"/><stop offset="1" stop-color="#ece5e0"/></linearGradient>
                            <linearGradient id="flankD" gradientUnits="userSpaceOnUse" x1="620" y1="420" x2="1270" y2="190"><stop offset="0" stop-color="#59544f"/><stop offset=".3" stop-color="#736d68"/><stop offset=".7" stop-color="#9a948e"/><stop offset="1" stop-color="#c8c1bb"/></linearGradient>
                            <linearGradient id="flankE" gradientUnits="userSpaceOnUse" x1="450" y1="560" x2="900" y2="220"><stop offset="0" stop-color="#4c4844"/><stop offset=".5" stop-color="#5f5a55"/><stop offset="1" stop-color="#827c76"/></linearGradient>
                            <linearGradient id="flankF" gradientUnits="userSpaceOnUse" x1="360" y1="760" x2="760" y2="380"><stop offset="0" stop-color="#393532"/><stop offset=".5" stop-color="#504c47"/><stop offset="1" stop-color="#625d58"/></linearGradient>
                            <linearGradient id="flankG" gradientUnits="userSpaceOnUse" x1="380" y1="840" x2="640" y2="560"><stop offset="0" stop-color="#373330"/><stop offset="1" stop-color="#55514c"/></linearGradient>
                            <linearGradient id="flankH" gradientUnits="userSpaceOnUse" x1="380" y1="960" x2="560" y2="760"><stop offset="0" stop-color="#33302c"/><stop offset="1" stop-color="#4a4642"/></linearGradient>
                            <linearGradient id="lowLand" gradientUnits="userSpaceOnUse" x1="60" y1="960" x2="700" y2="500"><stop offset="0" stop-color="#55504c"/><stop offset=".5" stop-color="#716b66"/><stop offset="1" stop-color="#aaa39d"/></linearGradient>
                            <linearGradient id="landF" gradientUnits="userSpaceOnUse" x1="60" y1="780" x2="900" y2="330"><stop offset="0" stop-color="#66605b"/><stop offset=".45" stop-color="#9a938d"/><stop offset="1" stop-color="#efe9e4"/></linearGradient>
                            <linearGradient id="darkLand" gradientUnits="userSpaceOnUse" x1="200" y1="1300" x2="620" y2="700"><stop offset="0" stop-color="#383431"/><stop offset="1" stop-color="#6e6863"/></linearGradient>
                            <linearGradient id="bore" x1="0" y1="0" x2=".2" y2="1"><stop offset=".08" stop-color="#34312d"/><stop offset=".3" stop-color="#55504c"/><stop offset=".55" stop-color="#a8a19b"/><stop offset=".72" stop-color="#e8e0da"/><stop offset=".86" stop-color="#e3dbd5"/><stop offset="1" stop-color="#9a938d"/></linearGradient>
                            <linearGradient id="notch" x1="0" y1="1" x2="1" y2="0"><stop offset="0" stop-color="#dcd5cf"/><stop offset="1" stop-color="#a59e98"/></linearGradient>
                        </defs>
                        <g class="edges">
                            <!-- top teeth -->
                            <path fill="url(#backFlank)" d="M1018 58L1024 50C1160 78 1300 120 1490 160L1683 228L1500 300L980 110Z"/>
                            <path fill="url(#backFlank)" d="M794 70L812 40L860 37C1020 45 1220 90 1450 155L1440 200L800 150Z"/>
                            <path fill="none" d="M812 41C980 50 1150 72 1400 138"/>
                            <path fill="url(#backFlank)" d="M580 152L592 95L640 78C900 58 1180 82 1450 152L1490 162L1400 280L700 250Z"/>
                            <path fill="none" d="M592 95C850 65 1100 80 1340 128"/>
                            <path fill="url(#topFlank)" d="M398 285Q388 245 391 211L432 182C800 95 1160 98 1400 140L1490 162L1410 275L1350 268L600 350Z"/>
                            <path fill="url(#topLand)" d="M391 211L432 182C750 105 1100 95 1400 140C1100 105 800 105 391 211Z"/>
                            <!-- left teeth, back to front -->
                            <path fill="url(#flankD)" d="M270 455Q235 420 225 376L258 338C600 220 950 150 1322 157L1275 165L1230 290L1170 300L1050 260L600 420Z"/>
                            <path fill="url(#midLand)" d="M225 376L258 338C600 220 950 150 1322 157L1275 164C950 165 560 250 225 376Z"/>
                            <path fill="url(#flankE)" d="M200 638Q145 615 109 574L130 531C450 370 760 265 1102 212L1058 232L1050 352L900 400L500 560Z"/>
                            <path fill="url(#midLand)" d="M109 574L130 531C450 370 760 265 1102 212L1058 232C750 280 450 400 109 574Z"/>
                            <path fill="url(#flankF)" d="M172 815Q110 810 58 785L64 740C300 565 580 410 900 326L863 357L893 466L760 540L300 800Z"/>
                            <path fill="#68625d" d="M172 815C380 660 640 540 893 466L850 510L733 500L176 838Z"/>
                            <path fill="url(#landF)" d="M58 785L64 740C300 565 580 410 900 326L863 357C560 450 320 600 58 785Z"/>
                            <path fill="url(#flankG)" d="M203 982Q140 998 76 990L67 947C240 760 440 600 733 490L704 530L770 618L600 740Z"/>
                            <path fill="#5a5550" d="M203 982C380 820 570 710 770 618L743 669L616 687L216 1022Z"/>
                            <path fill="url(#lowLand)" d="M76 990L67 947C240 760 440 600 733 490L704 530C460 640 260 790 76 990Z"/>
                            <path fill="url(#flankH)" d="M285 1122Q225 1160 161 1167L138 1133C270 930 420 800 616 687L601 732L697 790L480 980Z"/>
                            <path fill="#57524d" d="M285 1122C400 980 540 870 697 790L686 845Q610 860 565 900L318 1158Z"/>
                            <path fill="url(#darkLand)" d="M161 1167L138 1133C270 930 420 800 616 687L601 732C420 845 280 980 161 1167Z"/>
                            <path fill="#33302c" d="M413 1223Q360 1280 303 1299L268 1277C310 1110 430 980 565 900L562 943L679 966L580 1050Z"/>
                            <path fill="#47423e" d="M413 1223C500 1110 600 1010 679 966L685 1019Q620 1055 579 1104L460 1243Z"/>
                            <path fill="url(#darkLand)" d="M303 1299L268 1277C310 1110 430 980 565 900L562 943C430 1050 350 1160 303 1299Z"/>
                            <path fill="#7b756f" d="M460 1243L505 1190L500 1230Q450 1290 445 1345Z"/>
                            <path fill="#33302c" d="M582 1278Q540 1340 489 1376L443 1365C440 1260 510 1170 579 1104L590 1142L717 1130Z"/>
                            <path fill="#3f3b37" d="M582 1278L717 1130L740 1174L633 1289Z"/>
                            <path fill="#3f3b37" d="M481 1374L443 1365C440 1260 510 1170 579 1104L590 1142Q480 1270 481 1374Z"/>
                            <path fill="#8a847d" d="M630 1289L700 1215L663 1284Q630 1330 625 1400Z"/>
                            <path fill="#33302c" d="M760 1322Q720 1380 671 1417L622 1408Q620 1330 663 1284L687 1314L808 1263Z"/>
                            <path fill="none" d="M660 1415Q655 1370 687 1314"/>
                            <path fill="#3f3b37" d="M760 1322L808 1263L847 1297L808 1331Z"/>
                            <path fill="#8a847d" d="M808 1331L847 1297Q805 1350 803 1416Z"/>
                            <path fill="#33302c" d="M802 1416V1450L850 1460Q900 1415 943 1357L839 1438ZM943 1357L960 1360L994 1374Z"/>
                            <path fill="none" d="M839 1438L842 1458"/>
                            <!-- right notches -->
                            <path fill="url(#notch)" d="M1534 178L1683 228L1640 330L1529 292Z"/>
                            <path fill="url(#notch)" d="M1715 283L1837 350L1760 410L1676 368Z"/>
                            <path fill="url(#notch)" d="M1832 435L1931 520L1850 530L1807 535L1783 490Z"/>
                            <path fill="#8f8882" d="M1884 620L1961 721L1845 699L1838 646Z"/>
                            <path fill="#7a746e" d="M1866 814Q1895 870 1923 935L1826 875L1838 820Z"/>
                            <path fill="#56514d" d="M1781 995Q1805 1060 1819 1137L1753 1047Z"/>
                            <path fill="#45413e" d="M1655 1175Q1660 1240 1662 1307L1630 1197Z"/>
                            <path fill="#45413e" d="M1482 1305Q1480 1370 1476 1400L1472 1311Z"/>
                            <!-- root slivers -->
                            <path fill="#f1ece8" d="M985 365L1050 352L998 382ZM805 495L893 466L850 510ZM1168 285L1230 283L1171 299ZM1355 262L1412 269L1355 268Z"/>
                            <path fill="#aaa39d" d="M672 672Q730 640 770 618L743 669Z"/>
                            <!-- front face -->
                            <path fill="#68635f" d="M1058 232L1102 212Q1140 235 1171 299L1230 283Q1240 215 1275 165L1322 157Q1352 200 1355 268L1412 269Q1440 210 1490 162L1534 171Q1544 230 1529 292L1579 310Q1610 265 1683 228L1721 248Q1712 310 1676 368L1715 401Q1760 370 1837 350L1862 384Q1830 445 1783 490L1807 535Q1860 518 1931 520L1944 562Q1905 605 1838 646L1845 699Q1905 702 1961 721L1959 767Q1910 800 1838 820L1826 875Q1880 893 1923 935L1906 979Q1840 1000 1781 995L1753 1047Q1800 1080 1819 1137L1790 1175Q1725 1175 1672 1154L1630 1197Q1662 1250 1662 1307L1622 1338Q1570 1325 1524 1282L1472 1311Q1482 1370 1465 1433L1420 1452Q1375 1425 1350 1364L1292 1381Q1280 1450 1248 1500L1201 1506Q1172 1460 1168 1398L1111 1396Q1080 1450 1033 1501L988 1493Q980 1435 994 1374L943 1357Q900 1410 839 1438L802 1416Q803 1350 847 1297L808 1263Q760 1300 687 1314L663 1284Q680 1230 740 1174L717 1130Q660 1145 590 1142L579 1104Q620 1055 685 1019L679 966Q620 968 562 943L565 900Q610 860 686 845L697 790Q640 770 601 732L616 687Q680 668 743 669L770 618Q725 580 704 530L733 490Q795 488 850 510L893 466Q862 415 863 357L900 326Q955 345 998 382L1050 352Q1043 290 1058 232Z"/>
                            <path fill="url(#bore)" d="M1262 694C1340 680 1408 730 1408 805C1408 890 1330 972 1238 972C1170 972 1116 930 1116 850C1116 775 1170 720 1232 702L1228 674L1258 667Z"/>
                            <path fill="#4f4a46" d="M1228 674L1258 667L1262 694L1232 702Z"/>
                        </g>
                    </svg>

                    <svg class="triad" viewBox="0 0 76 70" aria-hidden="true">
                        <path d="M34 56L16 50" stroke="#9c1b1b" stroke-width="4"/><path d="M8 47l9-3 4 4-3 6z" fill="#c02424"/>
                        <path d="M34 56L54 48" stroke="#1b1b9c" stroke-width="4"/><path d="M62 46l-10-3-1 5 4 5z" fill="#1b1b9c"/>
                        <path d="M34 56L32 30" stroke="#1c6f22" stroke-width="4"/><path d="M26 32l5-12 6 12q-5 3-11 0z" fill="#24862c"/>
                        <text x="26" y="17" fill="#1c7a22">Y</text><text x="1" y="49" fill="#c02424">X</text><text x="60" y="45" fill="#1b1b9c">Z</text>
                    </svg>

                    <div class="task-pane">
                        <button class="current" aria-label="Resources"><svg class="icon"><use href="#home"/></svg></button>
                        <button aria-label="Design library"><svg class="icon"><use href="#books"/></svg></button>
                        <button aria-label="File explorer"><svg class="icon"><use href="#folder-open"/></svg></button>
                        <button aria-label="View palette"><svg class="icon"><use href="#palette"/></svg></button>
                        <button aria-label="Appearances"><svg class="icon"><use href="#sphere"/></svg></button>
                        <button aria-label="Custom properties"><svg class="icon"><use href="#list"/></svg></button>
                    </div>
                </main>
            </div>

            <!-- Model tabs -->
            <div class="model-tabs">
                <div class="nav">
                    <button aria-label="First">|◀</button><button aria-label="Previous">◀</button><button aria-label="Next">▶</button><button aria-label="Last">▶|</button>
                </div>
                <button class="mtab current">Model</button><button class="mtab">3D Views</button><button class="mtab wide">Motion Study 1</button>
                <div class="rest"></div>
            </div>
        </div>

        <!-- Right tool bars -->
        <div class="side">
            <div class="side-top">
                <svg class="icon"><use href="#sticker"/></svg>
                <svg class="icon"><use href="#chevrons"/></svg>
            </div>
            <div class="side-tools">
                <button class="spell"><span>Abc</span><svg class="icon"><use href="#tick"/></svg></button>
                <svg class="icon"><use href="#tape"/></svg>
                <svg class="icon"><use href="#mass"/></svg>
                <svg class="icon"><use href="#section-prop"/></svg>
                <svg class="icon"><use href="#gauge"/></svg>
                <svg class="icon"><use href="#perf"/></svg>
                <svg class="icon"><use href="#cube-check"/></svg>
                <svg class="icon"><use href="#cube-tick"/></svg>
                <svg class="icon"><use href="#sigma"/></svg>
                <svg class="icon"><use href="#thick"/></svg>
                <svg class="icon"><use href="#compare"/></svg>
                <svg class="icon"><use href="#thickness"/></svg>
                <svg class="icon"><use href="#doc-q"/></svg>
                <div class="with-drop"><svg class="icon"><use href="#check-x"/></svg><button class="drop" aria-label="Check options"></button></div>
                <svg class="icon"><use href="#excel"/></svg>
            </div>
            <div class="side-lines"></div>
            <div class="side-tools">
                <svg class="icon"><use href="#sim"/></svg>
                <svg class="icon"><use href="#flow"/></svg>
                <svg class="icon"><use href="#round-check"/></svg>
                <svg class="icon"><use href="#flags"/></svg>
                <svg class="icon"><use href="#ring"/></svg>
            </div>
            <div class="side-rule"></div>
            <div class="side-tools framed">
                <svg class="icon faint"><use href="#g-front"/></svg>
                <svg class="icon faint"><use href="#g-back"/></svg>
                <svg class="icon faint"><use href="#g-right"/></svg>
                <svg class="icon faint"><use href="#g-left"/></svg>
                <svg class="icon faint"><use href="#g-cube"/></svg>
                <svg class="icon faint"><use href="#g-back"/></svg>
                <svg class="icon faint"><use href="#g-round"/></svg>
                <hr>
                <svg class="icon"><use href="#grid-cursor"/></svg>
                <svg class="icon faint"><use href="#repair"/></svg>
                <svg class="icon"><use href="#move"/></svg>
                <svg class="icon"><use href="#stack-green"/></svg>
                <svg class="icon"><use href="#stack-white"/></svg>
            </div>
        </div>
    </div>

    <footer class="status">
        <span>SOLIDWORKS Premium 2020 SP0.0</span>
        <span class="editing">Editing Part</span>
        <svg class="icon"><use href="#rebuild"/></svg>
        <button class="units">MMGS</button>
        <svg class="icon"><use href="#tag"/></svg>
    </footer>
</body>
</html>
```
FILE: styles.css
```css
* {
    box-sizing: border-box;
}
body {
    margin: 0;
    height: 100vh;
    display: flex;
    flex-direction: column;
    overflow: hidden;
    background-color: #f6f6f6;
    color: #1e1e1e;
    font-family: "Open Sans", "Noto Sans", sans-serif;
    font-size: 13px;
}
button, input {
    font: inherit;
    color: inherit;
    margin: 0;
    padding: 0;
    border: none;
    background: none;
}
ul {
    list-style: none;
    margin: 0;
    padding: 0;
}
.sprite {
    position: absolute;
    width: 0;
    height: 0;
}
.icon {
    width: 20px;
    height: 20px;
    flex: none;
    display: block;
    fill: none;
    stroke: #333;
    stroke-width: 1px;
}
.tool {
    width: 26px;
    height: 26px;
    display: flex;
    align-items: center;
    justify-content: center;
    flex: none;
}
.drop {
    width: 14px;
    height: 26px;
    display: flex;
    align-items: center;
    justify-content: center;
    flex: none;
}
.drop::after,
.menu-btn::after {
    content: "";
    border: 3px solid transparent;
    border-top-color: #444;
    border-bottom: none;
}
.faded::after {
    border-top-color: #aaa;
}
.pressed {
    background-color: #b0b0b0;
    border: 1px solid #777;
}
.dot {
    width: 6px;
    height: 6px;
    border: 1px solid #999;
    border-radius: 50%;
    background-color: #ccc;
}

/* Title bar */
.titlebar {
    position: relative;
    height: 33px;
    flex: none;
    display: flex;
    align-items: center;
    padding-top: 1px;
    border-bottom: 1px solid #868686;
    z-index: 2;
}
.titlebar-left {
    width: 544px;
    height: 32px;
    display: flex;
    align-items: center;
    padding-left: 10px;
    border-right: 1px solid #868686;
}
.logo {
    width: 145px;
    height: 36px;
    align-self: flex-start;
    display: flex;
    align-items: center;
    padding-left: 5px;
    border: 1px solid #868686;
    border-top: none;
    background: linear-gradient(120deg, #fff 50%, #dcdcdc);
    color: #d3261c;
    text-decoration: none;
}
.logo-mark {
    width: 28px;
    height: 32px;
    fill: none;
    stroke: #d3261c;
    stroke-width: 2px;
}
.logo-text {
    font-size: 16px;
    font-style: italic;
    margin-left: 5px;
    padding-top: 4px;
}
.menu {
    display: flex;
    margin-left: 20px;
}
.menu button {
    padding: 0 8px;
}
.pin {
    margin-left: auto;
    margin-right: 2px;
}
.pin .icon {
    width: 16px;
    height: 16px;
}
.quick {
    display: flex;
    padding-left: 13px;
}
.boxed {
    background-color: #fff;
    border: 1px solid #777;
    border-left: none;
}
.doc-title {
    flex: 1;
    text-align: center;
}
.search {
    width: 252px;
    height: 29px;
    display: flex;
    align-items: center;
    border: 2px solid #1a1a1a;
    background-color: #ebedf1;
    padding-left: 5px;
}
.search input {
    flex: 1;
    min-width: 0;
    margin-left: 6px;
}
.search input::placeholder {
    color: #555;
}
.search .drop {
    width: 16px;
}
.window-buttons {
    display: flex;
    margin-left: 4px;
}
.help {
    font-size: 18px;
    font-weight: bold;
}
.top-strip {
    position: absolute;
    left: 809px;
    top: 0;
    width: 301px;
    height: 1px;
    background: linear-gradient(90deg, #2f4f78 60px, #dcdcdc 60px);
}

/* Ribbon */
.main {
    flex: 1;
    display: flex;
    min-height: 0;
}
.work {
    flex: 1;
    min-width: 0;
    display: flex;
    flex-direction: column;
    background-color: #fff;
}
.ribbon {
    height: 87px;
    flex: none;
    margin-right: 3px;
    padding: 6px 0 0 5px;
    display: grid;
    grid-template-columns: 72px 72px 163px 66px 84px 50px 66px 125px 40px 94px 42px 70px 91px 48px 65px 38px 63px 73px 53px 53px 72px 50px 73px 70px 36px 66px;
    grid-template-rows: 78px;
    background-color: #f6f6f6;
    border-right: 1px solid #868686;
    border-bottom: 1px solid #868686;
}
.big {
    display: flex;
    flex-direction: column;
    align-items: center;
    justify-content: flex-start;
    padding-top: 12px;
    line-height: 19px;
    white-space: nowrap;
    text-align: center;
}
.big .icon {
    margin-bottom: 1px;
}
.big:disabled {
    color: #b5b5b5;
}
.menu-btn {
    padding-top: 4px;
}
.menu-btn::after {
    margin-top: auto;
    margin-bottom: 9px;
}
.active {
    background-color: #b0b0b0;
    border: 1px solid #777;
    padding-top: 11px;
}
.divided {
    border-right: 1px solid #c0c0c0;
}
.stack button {
    height: 26px;
    display: flex;
    align-items: center;
    gap: 5px;
    padding-left: 2px;
    white-space: nowrap;
}

/* Command tabs */
.tab-strip {
    height: 28px;
    flex: none;
    display: flex;
    justify-content: space-between;
}
.tabs {
    display: grid;
    grid-template-columns: 80px 61px 75px 98px 95px 109px 74px 172px 57px;
    border-bottom: 1px solid #868686;
}
.tabs button {
    font-size: 14px;
    color: #333;
    background-color: #d3d3d3;
    border-right: 1px solid #868686;
}
.tabs .current {
    font-weight: bold;
    background-color: #f6f6f6;
}
.doc-buttons {
    display: flex;
    align-items: center;
    padding: 3px 7px 0 0;
}
.doc-buttons .icon {
    stroke: #999;
}

/* Workspace */
.workspace {
    flex: 1;
    min-height: 0;
    display: flex;
}
.left-bar {
    width: 32px;
    flex: none;
    display: flex;
    flex-direction: column;
    padding-top: 7px;
    background-color: #f6f6f6;
}
.left-bar .icon {
    margin: 3px 6px;
    stroke: #c4c4c4;
}
.left-bar .dark {
    stroke: #333;
}
.left-bar hr {
    width: 30px;
    margin: 5px 0;
    border: none;
    border-top: 1px solid #868686;
}
.panel {
    position: relative;
    width: 374px;
    flex: none;
    display: flex;
    flex-direction: column;
    background-color: #f6f6f6;
    border-right: 1px solid #868686;
}
.grip {
    height: 21px;
    margin: 4px 3px 0 0;
    display: flex;
    align-items: center;
    justify-content: center;
    border-top: 1px solid #b4b4b4;
    border-bottom: 1px solid #b4b4b4;
}
.panel-tabs {
    height: 30px;
    margin-right: 3px;
    padding-left: 2px;
    display: flex;
    align-items: flex-end;
    border-bottom: 1px solid #b4b4b4;
}
.ptab {
    width: 40px;
    height: 25px;
    display: flex;
    align-items: center;
    justify-content: center;
    background-color: #d3d3d3;
    border: 1px solid #868686;
    border-left: none;
    border-bottom: none;
}
.ptab.current {
    background-color: #f6f6f6;
}
.pane-head {
    margin-left: auto;
    height: 26px;
    display: flex;
    align-items: center;
    gap: 5px;
}
.chev {
    width: 20px;
    height: 20px;
    display: flex;
    align-items: center;
    justify-content: center;
}
.chev::after {
    content: "";
    width: 7px;
    height: 7px;
    border: solid #444;
    border-width: 0 0 2px 2px;
    transform: rotate(45deg);
}
.chev.right::after {
    transform: rotate(225deg);
}
.panel-body {
    flex: 1;
    min-height: 0;
    display: grid;
    grid-template-columns: 270px 28px 24px 24px;
}
.tree-col {
    min-width: 0;
    display: flex;
    flex-direction: column;
    border-left: 1px solid #b4b4b4;
    border-right: 1px solid #b4b4b4;
}
.filter {
    height: 32px;
    flex: none;
    margin: 0 4px;
    padding-left: 1px;
    display: flex;
    align-items: center;
    border: 1px solid #b4b4b4;
}
.filter input {
    flex: 1;
    min-width: 0;
}
.root {
    height: 27px;
    flex: none;
    margin-bottom: -3px;
    padding-left: 3px;
    display: flex;
    align-items: center;
    gap: 5px;
    font-size: 14px;
    white-space: nowrap;
    border-bottom: 4px solid #e2ad35;
}
.root .icon,
.tree .icon,
.state-col .icon {
    width: 18px;
    height: 18px;
}
.tree li {
    height: 24px;
    display: flex;
    align-items: center;
    gap: 5px;
    padding-left: 26px;
    font-size: 14px;
}
.tree .child {
    padding-left: 49px;
}
.closed::before,
.opened::before {
    content: "";
    width: 0;
    margin-left: -18px;
    border: 4px solid transparent;
}
.closed::before {
    border-left: 5px solid #555;
    border-right: none;
    margin-right: 8px;
}
.opened::before {
    border-top: 5px solid #555;
    border-bottom: none;
    margin-left: -19px;
    margin-right: 6px;
}
.rollback {
    height: 4px;
    background-color: #4088b5;
}
.scrollbar {
    margin-top: auto;
    height: 20px;
    flex: none;
    display: flex;
    background-color: #efefef;
}
.track {
    flex: 1;
}
.thumb {
    width: 71%;
    height: 20px;
    background-color: #cdcdcd;
}
.state-col,
.pane-col {
    border-right: 1px solid #b4b4b4;
}
.state-col {
    padding-top: 56px;
}
.state-col li {
    height: 24px;
    display: flex;
    align-items: center;
    justify-content: center;
}
.swatch {
    margin: 34px 1px 0;
    border: 1px solid #111;
    background-color: #fff;
}
.panel-foot {
    height: 5px;
    margin-right: 3px;
    border-bottom: 1px solid #b4b4b4;
}
.flyout {
    position: absolute;
    left: 373px;
    top: 387px;
    width: 12px;
    height: 48px;
    display: flex;
    align-items: center;
    justify-content: center;
    background-color: #f6f6f6;
    border: 1px solid #868686;
    border-left: none;
    z-index: 1;
}

/* Graphics area */
.canvas {
    position: relative;
    flex: 1;
    min-width: 0;
    background-color: #fff;
}
.hud {
    display: flex;
    justify-content: center;
    padding: 2px 12px 0 0;
}
.hud .icon {
    stroke: #666;
}
.hud .drop::after {
    border-top-color: #888;
}
.hud .small {
    width: 20px;
}
.gear {
    position: absolute;
    left: calc(50% - 367px);
    top: calc(50% - 344px);
    width: 660px;
    height: 700px;
}
.edges path {
    stroke: #14110f;
    stroke-width: 1px;
    stroke-linejoin: round;
    vector-effect: non-scaling-stroke;
}
.triad {
    position: absolute;
    left: 16px;
    bottom: 56px;
    width: 76px;
    height: 70px;
    font-size: 12px;
    fill: none;
}
.task-pane {
    position: absolute;
    right: 0;
    top: 55px;
    width: 33px;
    border: 1px solid #868686;
    border-right: none;
}
.task-pane button {
    width: 100%;
    height: 30px;
    display: flex;
    align-items: center;
    justify-content: center;
    background-color: #d3d3d3;
    border-bottom: 1px solid #868686;
}
.task-pane .current {
    height: 29px;
    background-color: #fff;
}
.task-pane button:last-child {
    border-bottom: none;
}

/* Model tabs */
.model-tabs {
    height: 21px;
    flex: none;
    display: flex;
    padding-left: 59px;
    background-color: #f6f6f6;
    border-bottom: 1px solid #868686;
}
.nav {
    display: flex;
    border-top: 1px solid #222;
}
.nav button {
    width: 20px;
    font-size: 9px;
    color: #75758e;
    background-color: #a8a8bc;
    border: 1px solid #8b8ba3;
}
.mtab {
    padding: 0 11px;
    font-size: 15px;
    line-height: 18px;
    background-color: #d3d3d3;
    border: 1px solid #868686;
    border-left: none;
    border-bottom: none;
}
.mtab.current {
    font-weight: bold;
    color: #000;
    background-color: #f6f6f6;
    padding: 0 11px 0 16px;
    border-top-color: #f6f6f6;
}
.mtab.wide {
    padding: 0 24px 0 13px;
}
.rest {
    flex: 1;
    border-top: 1px solid #868686;
    border-right: 1px solid #868686;
}

/* Right tool bars */
.side {
    width: 52px;
    flex: none;
    border-bottom: 1px solid #868686;
}
.side-top {
    height: 33px;
    display: flex;
    align-items: center;
    gap: 2px;
    padding-left: 5px;
    margin-bottom: 59px;
    border: 1px solid #868686;
    border-left: none;
    border-top: none;
}
.side-tools {
    display: flex;
    flex-direction: column;
}
.side-tools .icon {
    margin: 3px 8px;
}
.spell {
    position: relative;
    width: 36px;
    height: 26px;
}
.spell span {
    position: absolute;
    left: 8px;
    top: -1px;
    font-size: 10px;
    line-height: 14px;
}
.with-drop {
    display: flex;
}
.side-lines {
    height: 9px;
    margin: 3px 1px 5px 7px;
    border-top: 1px solid #868686;
    border-bottom: 1px solid #868686;
}
.side-rule {
    margin: 6px 0 0 2px;
    border-top: 1px solid #868686;
}
.framed {
    width: 34px;
    margin-left: 2px;
    padding: 8px 0 6px;
    border-right: 1px solid #868686;
    border-bottom: 1px solid #868686;
}
.framed .icon {
    margin: 3px 6px;
}
.framed hr {
    width: 25px;
    margin: 2px 0 5px 5px;
    border: none;
    border-top: 1px solid #868686;
}
.side-tools .faint {
    stroke: #c4c4c4;
}

/* Status bar */
.status {
    height: 16px;
    flex: none;
    display: flex;
    align-items: flex-start;
    padding-left: 1px;
    font-size: 14px;
    line-height: 24px;
    white-space: nowrap;
    overflow: hidden;
}
.editing {
    margin-left: auto;
    margin-right: 28px;
}
.status .icon {
    margin-top: 3px;
}
.units {
    display: flex;
    align-items: center;
    gap: 23px;
    margin: 0 28px 0 78px;
    line-height: 24px;
}
.units::after {
    content: "";
    border: 4px solid transparent;
    border-bottom-color: #444;
    border-top: none;
}
```
